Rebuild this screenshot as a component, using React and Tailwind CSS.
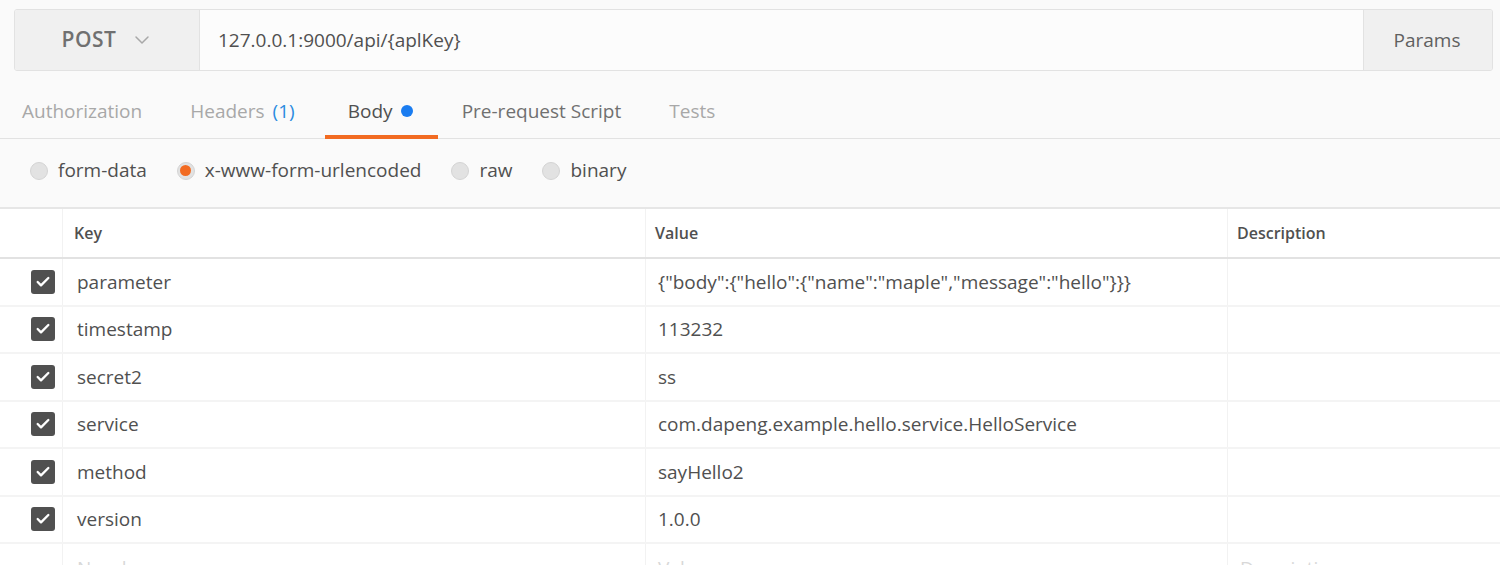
import { ChevronDown, Check } from 'lucide-react';

const rows = [
  { key: 'parameter', value: '{"body":{"hello":{"name":"maple","message":"hello"}}}' },
  { key: 'timestamp', value: '113232' },
  { key: 'secret2', value: 'ss' },
  { key: 'service', value: 'com.dapeng.example.hello.service.HelloService' },
  { key: 'method', value: 'sayHello2' },
  { key: 'version', value: '1.0.0' },
];

const radios = [
  { id: 'form-data', label: 'form-data' },
  { id: 'urlencoded', label: 'x-www-form-urlencoded', active: true },
  { id: 'raw', label: 'raw' },
  { id: 'binary', label: 'binary' },
];

export default function App() {
  return (
    <div
      className="h-[565px] w-[1500px] overflow-hidden bg-[#fafafa] text-[#505050]"
      style={{ fontFamily: '"Open Sans", "Noto Sans", sans-serif' }}
    >
      {/* Request bar */}
      <div className="pl-[14px] pr-[7px] pt-[9px]">
        <div className="flex h-[62px] overflow-hidden rounded-[3px] border border-[#e2e2e2]">
          <button className="flex w-[185px] shrink-0 items-center justify-center gap-[14px] border-r border-[#e2e2e2] bg-[#f0f0f0] pl-[2px]">
            <span className="text-[21px] font-semibold tracking-[0.5px] text-[#707070]">POST</span>
            <ChevronDown size={24} strokeWidth={1.5} className="text-[#a8a8a8]" />
          </button>
          <div className="flex flex-1 items-center bg-[#fcfcfc] pl-[18px] text-[19px] text-[#505050]">
            127.0.0.1:9000/api/{'{aplKey}'}
          </div>
          <button className="w-[129px] shrink-0 border-l border-[#e2e2e2] bg-[#f0f0f0] pr-[2px] text-[19px] text-[#606060]">
            Params
          </button>
        </div>
      </div>

      {/* Tabs */}
      <div className="mt-[17px] flex h-[51px] items-stretch border-b border-[#e2e2e2] pl-[22px] text-[19px]">
        <div className="flex items-center pb-[4px] pr-[48px] text-[#a8a8a8]">Authorization</div>
        <div className="flex items-center pb-[4px] pr-[30px] text-[#a8a8a8]">
          Headers <span className="ml-[8px] text-[#2b8be0]">(1)</span>
        </div>
        <div className="relative flex w-[113px] items-center justify-center gap-[8px] pb-[4px] pr-[2px] text-[#505050]">
          Body
          <span className="h-[12px] w-[12px] rounded-full bg-[#1a7cf0]" />
          <span className="absolute bottom-[-1px] left-0 right-0 h-[4px] bg-[#f26b22]" />
        </div>
        <div className="flex items-center pb-[4px] pl-[24px] pr-[48px] text-[#707070]">Pre-request Script</div>
        <div className="flex items-center pb-[4px] text-[#a8a8a8]">Tests</div>
      </div>

      {/* Body type */}
      <div className="flex h-[68px] items-center gap-[30px] pb-[5px] pl-[30px] text-[19px] text-[#505050]">
        {radios.map((r) => (
          <label key={r.id} className="flex items-center gap-[10px]">
            <span className="flex h-[18px] w-[18px] items-center justify-center rounded-full border border-[#d4d4d4] bg-[#e2e2e2]">
              {r.active && <span className="h-[11px] w-[11px] rounded-full bg-[#f26b22]" />}
            </span>
            {r.label}
          </label>
        ))}
      </div>

      {/* Table */}
      <div className="border-t-2 border-[#e6e6e6] bg-white">
        <div className="flex h-[50px] border-b-2 border-[#e2e2e2] text-[16px] font-semibold text-[#505050]">
          <div className="w-[63px] shrink-0 border-r border-[#f2f2f2]" />
          <div className="flex w-[583px] shrink-0 items-center border-r border-[#f2f2f2] pl-[11px]">Key</div>
          <div className="flex w-[582px] shrink-0 items-center border-r border-[#f2f2f2] pl-[9px]">Value</div>
          <div className="flex flex-1 items-center pl-[9px]">Description</div>
        </div>
        {rows.map((r) => (
          <div key={r.key} className="flex h-[47.5px] border-b-2 border-[#f4f4f4] text-[19px] text-[#505050]">
            <div className="flex w-[63px] shrink-0 items-center justify-end border-r border-[#f2f2f2] pr-[7px]">
              <span className="flex h-[24px] w-[24px] items-center justify-center rounded-[3px] bg-[#505050]">
                <Check size={16} strokeWidth={3.5} className="text-white" />
              </span>
            </div>
            <div className="flex w-[583px] shrink-0 items-center border-r border-[#f2f2f2] pl-[14px]">{r.key}</div>
            <div className="flex w-[582px] shrink-0 items-center border-r border-[#f2f2f2] pl-[12px]">{r.value}</div>
            <div className="flex-1" />
          </div>
        ))}
        <div className="flex h-[47.5px] text-[19px] text-[#d8d8d8]">
          <div className="w-[63px] shrink-0 border-r border-[#f2f2f2]" />
          <div className="flex w-[583px] shrink-0 items-start border-r border-[#f2f2f2] pl-[14px] pt-[10px]">New key</div>
          <div className="flex w-[582px] shrink-0 items-start border-r border-[#f2f2f2] pl-[12px] pt-[10px]">Value</div>
          <div className="flex flex-1 items-start pl-[12px] pt-[10px]">Description</div>
        </div>
      </div>
    </div>
  );
}
